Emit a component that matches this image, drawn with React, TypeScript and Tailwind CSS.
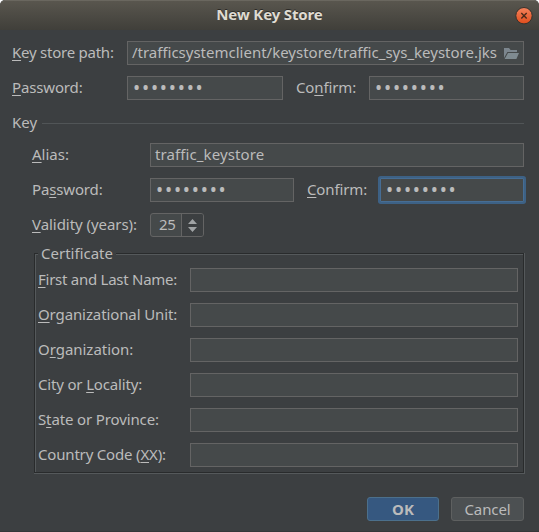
import type { ReactNode } from 'react';

function U({ children }: { children: ReactNode }) {
  return <span className="underline decoration-1 underline-offset-2 [text-decoration-skip-ink:none]">{children}</span>;
}

function Label({ className = '', children }: { className?: string; children: ReactNode }) {
  return <label className={`h-6 shrink-0 whitespace-pre leading-[23px] ${className}`}>{children}</label>;
}

function Field({ className = '', children }: { className?: string; children?: ReactNode }) {
  return (
    <div className={`flex h-6 items-center border border-[#646464] bg-[#45494a] ${className}`}>
      {children}
    </div>
  );
}

function Dots() {
  return <span className="-mt-px pl-[5px] text-[19px] leading-[20px] tracking-[1.8px]">••••••••</span>;
}

const certificateRows: { key: string; label: ReactNode; tracking: string }[] = [
  { key: 'name', label: <><U>F</U>irst and Last Name:</>, tracking: 'tracking-[-0.26px]' },
  { key: 'unit', label: <><U>O</U>rganizational Unit:</>, tracking: 'tracking-[-0.11px]' },
  { key: 'org', label: <>O<U>r</U>ganization:</>, tracking: 'tracking-[-0.03px]' },
  { key: 'city', label: <>City or <U>L</U>ocality:</>, tracking: 'tracking-[-0.17px]' },
  { key: 'state', label: <>S<U>t</U>ate or Province:</>, tracking: 'tracking-[-0.13px]' },
  { key: 'country', label: <>Country Code (<U>X</U>X):</>, tracking: 'tracking-[-0.18px]' },
];

function TitleBar() {
  return (
    <div className="flex h-[30px] items-center rounded-t-[5px] border-t border-[#6a675f] bg-gradient-to-b from-[#59564e] to-[#403f3a] pr-[6px]">
      <div className="w-[24px]" />
      <div className="-mt-[3px] flex-1 text-center leading-[26px] font-bold tracking-[-0.14px] text-[#dfdbd2] [text-shadow:0_-1px_0_#2b2a27]">
        New Key Store
      </div>
      <svg className="size-[18px]" viewBox="0 0 18 18">
        <defs>
          <linearGradient id="close" x1="0" y1="0" x2="0" y2="1">
            <stop offset="0" stopColor="#f5835d" />
            <stop offset="1" stopColor="#e14d1b" />
          </linearGradient>
        </defs>
        <circle cx="9" cy="8.7" r="8.2" fill="url(#close)" stroke="#35322d" strokeWidth="1" />
        <path d="M6.3 6l5.4 5.4M11.7 6l-5.4 5.4" stroke="#4b2a1a" strokeWidth="1.4" />
      </svg>
    </div>
  );
}

function Certificate() {
  return (
    <div className="mt-4 ml-[22px] h-[221px] w-[491px] border-r border-b border-[#55595b]">
      <div className="h-[220px] border border-[#292b2c]">
        <div className="h-[218px] border-t border-l border-[#55595b]">
          <div className="-mt-[13px] ml-[2px] h-6 w-[78px] bg-[#3c3f41] pl-[3px] leading-[23px]">Certificate</div>
          <div className="mt-[2px] flex flex-col gap-[11px] pr-[5px] pl-[2px]">
            {certificateRows.map((row) => (
              <div key={row.key} className="flex">
                <Label className={`w-[152px] ${row.tracking}`}>{row.label}</Label>
                <Field className="flex-1" />
              </div>
            ))}
          </div>
        </div>
      </div>
    </div>
  );
}

export default function App() {
  return (
    <div className="bg-white">
      <div className="h-[532px] w-[539px] overflow-hidden rounded-t-[5px] bg-[#3c3f41] font-['Noto_Sans',sans-serif] text-[15px] text-[#bbbbbb]">
        <TitleBar />
        <div className="flex h-[502px] flex-col border-b border-[#353739] pt-[11px] pr-[15px] pl-3">
          <div className="flex">
            <Label className="w-[115px] tracking-[-0.24px]"><U>K</U>ey store path:</Label>
            <Field className="flex-1 justify-end pr-[4px]">
              <span className="-mt-px shrink-0 pr-[7px] leading-[21px] whitespace-nowrap">
                /trafficsystemclient/keystore/traffic_sys_keystore.jks
              </span>
              <svg className="mt-px h-[11px] w-[15px] shrink-0" viewBox="0 0 15 11">
                <path d="M0 10V0h5l1.6 2H13V4H3.4z" fill="#7c868e" />
                <path d="M4 5h11l-2.6 6H0.6z" fill="#7f8b91" />
              </svg>
            </Field>
          </div>
          <div className="mt-[11px] flex">
            <Label className="w-[115px] tracking-[-0.15px]"><U>P</U>assword:</Label>
            <Field className="w-[156px]"><Dots /></Field>
            <Label className="w-[86px] pl-[13px] tracking-[-0.13px]">Co<U>n</U>firm:</Label>
            <Field className="flex-1"><Dots /></Field>
          </div>
          <div className="mt-[11px] flex items-center gap-[5px] leading-[23px]">
            <span className="h-6">Key</span>
            <span className="h-px flex-1 bg-[#515557]" />
          </div>
          <div className="mt-2 flex pl-5">
            <Label className="w-[118px]"><U>A</U>lias:</Label>
            <Field className="flex-1 pl-1"><span className="-mt-px tracking-[0.1px]">traffic_keystore</span></Field>
          </div>
          <div className="mt-[11px] flex pl-5">
            <Label className="w-[118px] tracking-[-0.15px]">Pa<U>s</U>sword:</Label>
            <Field className="w-[144px]"><Dots /></Field>
            <Label className="w-[86px] pl-[13px] tracking-[-0.13px]"><U>C</U>onfirm:</Label>
            <Field className="flex-1 rounded-[1px] border-[#466d94]! shadow-[0_0_0_2px_#3d6185]"><Dots /></Field>
          </div>
          <div className="mt-[11px] flex pl-5">
            <Label className="w-[118px] tracking-[-0.05px]"><U>V</U>alidity (years):</Label>
            <div className="flex h-6 w-[54px] rounded-[3px] border border-[#646464] bg-[#45494a]">
              <span className="w-[31px] border-r border-[#646464] pl-2 leading-[21px] tracking-[-0.3px]">25</span>
              <span className="flex flex-1 items-center justify-center rounded-r-[2px] bg-[#3c3f41]">
                <svg className="h-[13px] w-[9px]" viewBox="0 0 9 13">
                  <path d="M4.5 0L9 5H0zM0 8h9l-4.5 5z" fill="#a0a3a5" />
                </svg>
              </span>
            </div>
          </div>
          <Certificate />
          <div className="mt-[23px] flex justify-end gap-3">
            <button className="h-6 w-[72px] rounded-[3px] border border-[#4c708c] bg-[#365880] leading-[21px] font-bold">OK</button>
            <button className="h-6 w-[73px] rounded-[3px] border border-[#5e6060] bg-[#4c5052] leading-[21px] tracking-[-0.1px]">Cancel</button>
          </div>
        </div>
      </div>
    </div>
  );
}
